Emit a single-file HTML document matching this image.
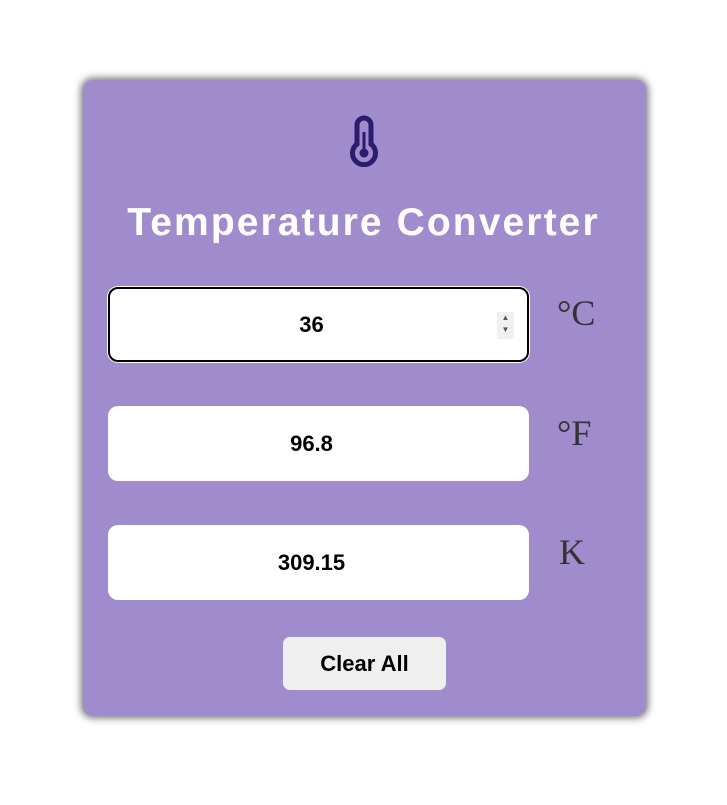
<!DOCTYPE html>
<html><head><style>
body{margin:0;width:727px;height:805px;background:#fff;font-family:"Liberation Sans",sans-serif;position:relative}
.card{position:absolute;left:83px;top:80px;width:563px;height:636px;background:#a08bcc;border-radius:10px;box-shadow:0 0 8px 2px rgba(0,0,0,.55)}
h1{position:absolute;left:0;right:0;top:201px;margin:0;text-align:center;color:#fff;font-size:39px;font-weight:bold;letter-spacing:2.1px;line-height:44px}
.in{position:absolute;left:108px;width:421px;height:75px;background:#fff;border-radius:10px;box-sizing:border-box;display:flex;align-items:center;justify-content:center;font-weight:bold;font-size:22px;color:#000;padding-right:14px}
.u{position:absolute;left:557px;font-family:"Liberation Serif",serif;font-size:36px;color:#333}
.btn{position:absolute;left:283px;top:637px;width:163px;height:53px;background:#efefef;border-radius:7px;display:flex;align-items:center;justify-content:center;font-weight:bold;font-size:22px}
</style></head><body>
<div class="card"></div>
<svg style="position:absolute;left:349px;top:115px" width="30" height="52" viewBox="0 0 30 52">
<path d="M8 29 V10 a7 7 0 0 1 14 0 V29 a11.5 11.5 0 1 1 -14 0 Z" fill="none" stroke="#2a1d6e" stroke-width="5"/>
<line x1="15" y1="17" x2="15" y2="36" stroke="#2a1d6e" stroke-width="3"/>
<circle cx="15" cy="38" r="4.5" fill="#2a1d6e"/>
</svg>
<h1>Temperature Converter</h1>
<div class="in" style="top:287px;border:2px solid #000;box-shadow:0 0 0 1px #fff">36
<div style="position:absolute;right:13px;top:23px;width:17px;height:27px;background:#f0f0f0;font-size:8px;color:#555;line-height:12px;text-align:center">▲<br>▼</div></div>
<div class="u" style="top:292px">°C</div>
<div class="u" style="top:412px">°F</div>
<div class="in" style="top:406px">96.8</div>
<div class="in" style="top:525px">309.15</div>
<div class="u" style="top:531px;left:559px">K</div>
<div class="btn">Clear All</div>
</body></html>
